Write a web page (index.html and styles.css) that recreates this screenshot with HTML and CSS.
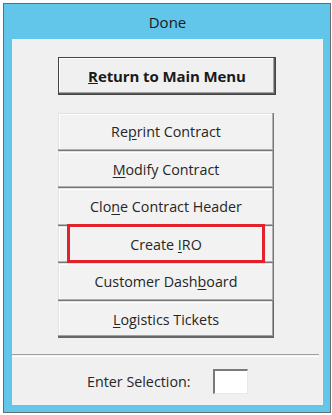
FILE: index.html
```html
<!DOCTYPE html>
<html>
<head>
<meta charset="utf-8">
<link rel="stylesheet" href="styles.css">
</head>
<body>
<div class="window">
  <div class="titlebar">Done</div>
  <div class="client">
    <div class="main-row">
      <button class="btn-default"><u>R</u>eturn to Main Menu</button>
    </div>
    <div class="list">
      <button class="btn">Re<u>p</u>rint Contract</button>
      <button class="btn"><u>M</u>odify Contract</button>
      <button class="btn">Clo<u>n</u>e Contract Header</button>
      <button class="btn highlighted">Create <u>I</u>RO<span class="mark"></span></button>
      <button class="btn">Customer Dash<u>b</u>oard</button>
      <button class="btn"><u>L</u>ogistics Tickets</button>
    </div>
    <div class="separator"></div>
    <div class="entry">
      <span class="entry-label">Enter Selection:</span>
      <span class="entry-box"></span>
    </div>
  </div>
</div>
</body>
</html>
```
FILE: styles.css
```css
html, body {
  margin: 0;
  padding: 0;
  background: #ffffff;
}
body {
  padding: 3px 1px 2px 3px;
  font-family: "Open Sans", "Noto Sans", sans-serif;
  color: #1e1e1e;
}
.window {
  border: 1px solid #6a6a6a;
  background: #62c5ea;
  display: flex;
  flex-direction: column;
  padding: 0 7px 7px 8px;
  box-sizing: border-box;
  width: 328px;
  height: 410px;
}
.titlebar {
  height: 35px;
  flex: 0 0 35px;
  display: flex;
  align-items: center;
  justify-content: center;
  font-size: 15px;
  color: #1a1a1a;
  padding-top: 1px;
  box-sizing: border-box;
}
.client {
  flex: 1;
  background: #f0f0f0;
  display: flex;
  flex-direction: column;
}
.main-row {
  padding: 18px 0 0 46px;
}
button {
  font-family: inherit;
  color: #222;
  margin: 0;
  cursor: default;
}
.btn-default {
  width: 218px;
  height: 38px;
  background: #f0f0f0;
  border: 1px solid #444;
  box-shadow: inset -1px -1px 0 #5c5c5c, inset -2px -2px 0 #a0a0a0, inset 1px 1px 0 #ffffff;
  font-weight: bold;
  font-size: 15px;
  padding: 0;
  color: #1a1a1a;
  letter-spacing: -0.1px;
}
.list {
  margin: 18px 0 0 46px;
  width: 216px;
  display: flex;
  flex-direction: column;
}
.btn {
  position: relative;
  height: 37.5px;
  width: 216px;
  background: #f2f2f2;
  border: none;
  box-shadow: inset -1px -1px 0 #777777, inset -2px -2px 0 #b0b0b0, inset 1px 1px 0 #e2e2e2, inset 2px 2px 0 #ffffff;
  font-size: 14.3px;
  padding: 0;
  color: #262626;
}
.btn:last-child {
  box-shadow: inset -1px -2px 0 #666666, inset -2px -3px 0 #a0a0a0, inset 1px 1px 0 #e2e2e2, inset 2px 2px 0 #ffffff;
}
.btn u {
  text-underline-offset: 2px;
}
.mark {
  position: absolute;
  left: 9px;
  top: -2px;
  width: 198px;
  height: 39px;
  border: 3px solid #e3202b;
  box-sizing: border-box;
}
.separator {
  margin-top: 16px;
  height: 1px;
  border-top: 1px solid #a0a0a0;
  border-bottom: 1px solid #ffffff;
  margin-right: 4px;
}
.entry {
  flex: 1;
  display: flex;
  align-items: center;
  padding-left: 75px;
  gap: 22px;
}
.entry-label {
  font-size: 14.3px;
  color: #262626;
}
.entry-box {
  width: 35px;
  height: 25px;
  background: #ffffff;
  box-sizing: border-box;
  border-top: 2px solid #7a7a7a;
  border-left: 2px solid #7a7a7a;
  border-right: 1px solid #e8e8e8;
  border-bottom: 1px solid #e8e8e8;
}
```
